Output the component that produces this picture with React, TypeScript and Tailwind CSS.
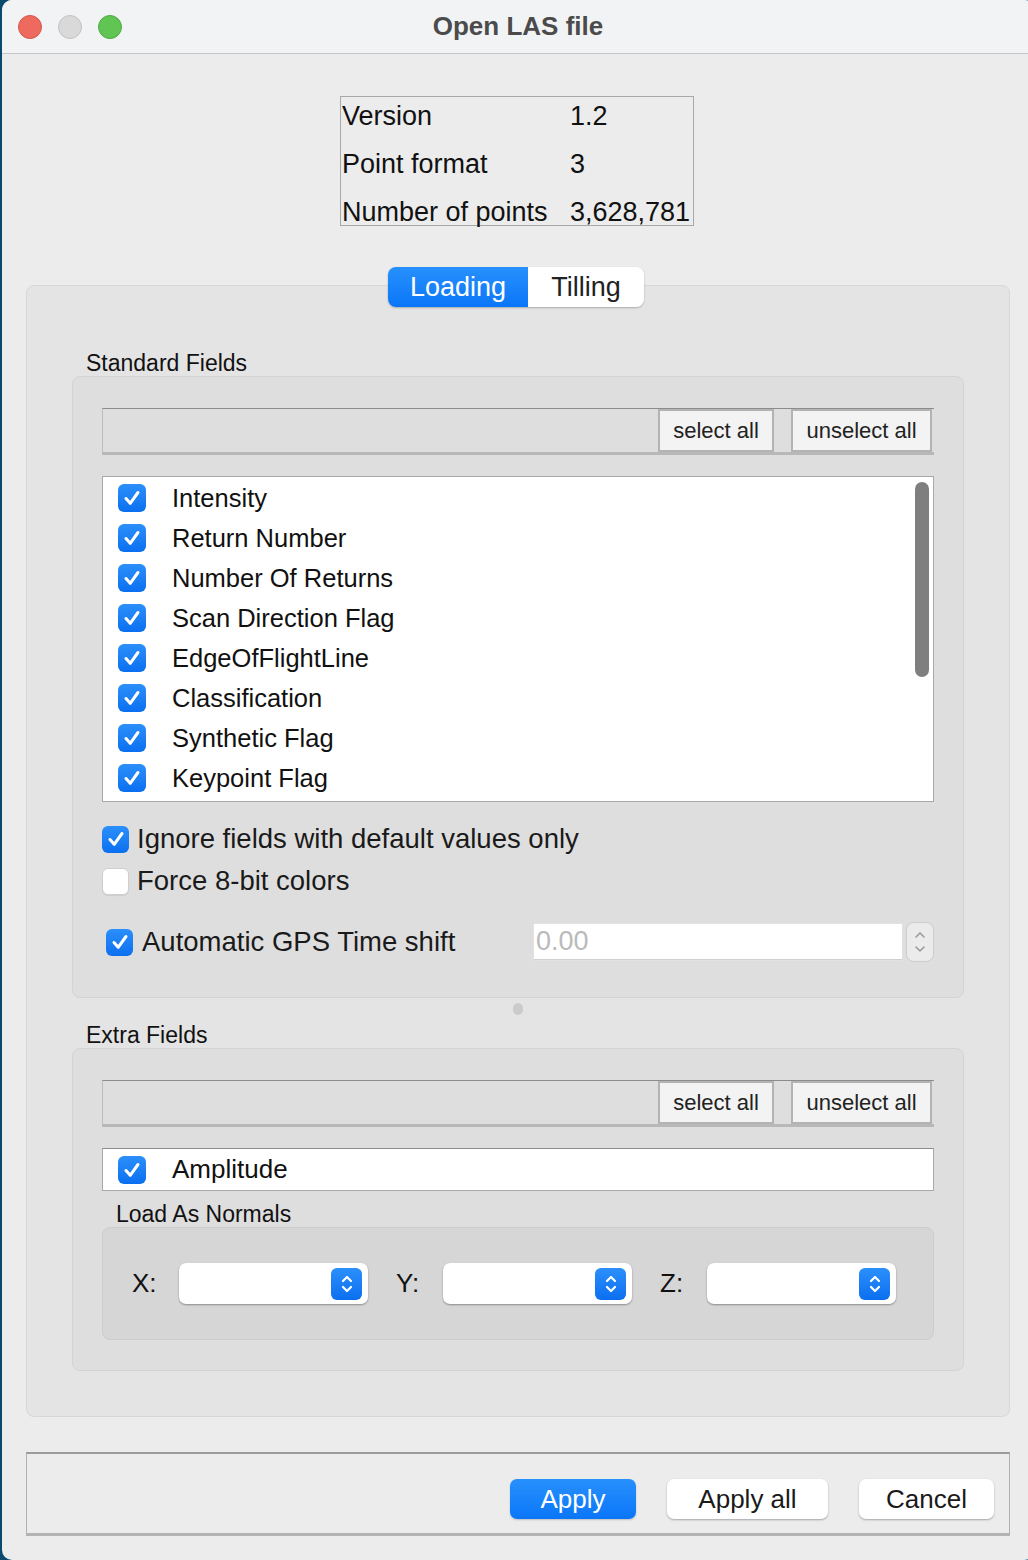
import React from 'react';

const font = "font-['Liberation_Sans',Arial,sans-serif]";

function Check({ size = 28, checked = true }: { size?: number; checked?: boolean }) {
  if (!checked) {
    return (
      <div
        className="shrink-0 rounded-[6px] bg-white border border-[#cfcfcf] shadow-[0_1px_1px_rgba(0,0,0,0.08)]"
        style={{ width: size, height: size }}
      />
    );
  }
  return (
    <div
      className="shrink-0 rounded-[6px] bg-gradient-to-b from-[#2b8ffb] to-[#0a6ff0] flex items-center justify-center"
      style={{ width: size, height: size }}
    >
      <svg width="20" height="20" viewBox="0 0 20 20" fill="none">
        <path d="M4 10.5l4.2 4.8L16 4.5" stroke="white" strokeWidth="3" strokeLinecap="round" strokeLinejoin="round" />
      </svg>
    </div>
  );
}

function ButtonBar() {
  return (
    <div className="h-[47px] flex items-center justify-end bg-[#dedede] border-t border-t-[#8c8c8c] border-l border-l-[#bcbcbc] border-b-[3px] border-b-[#b8b8b8]">
      <button className="h-[43px] w-[116px] bg-[#f3f3f3] border-2 border-[#b3b3b3] text-[22px] text-[#222]">select all</button>
      <button className="h-[43px] w-[141px] ml-[17px] mr-[2px] bg-[#f3f3f3] border-2 border-[#b3b3b3] text-[22px] text-[#222]">unselect all</button>
    </div>
  );
}

function Combo({ label }: { label: string }) {
  return (
    <div className="flex items-center">
      <span className="text-[26px] text-[#111] w-[47px]">{label}</span>
      <div className="w-[189px] h-[41px] bg-white rounded-[7px] shadow-[0_1px_2px_rgba(0,0,0,0.35)] flex items-center justify-end pr-[6px]">
        <div className="w-[31px] h-[32px] rounded-[6px] bg-gradient-to-b from-[#2b8ffb] to-[#0a6ff0] flex items-center justify-center">
          <svg width="14" height="22" viewBox="0 0 14 22" fill="none">
            <path d="M3 8l4-4 4 4M3 14l4 4 4-4" stroke="white" strokeWidth="2.2" strokeLinecap="round" strokeLinejoin="round" />
          </svg>
        </div>
      </div>
    </div>
  );
}

const fields = [
  'Intensity',
  'Return Number',
  'Number Of Returns',
  'Scan Direction Flag',
  'EdgeOfFlightLine',
  'Classification',
  'Synthetic Flag',
  'Keypoint Flag',
];

export default function App() {
  return (
    <div className={`w-[1028px] h-[1560px] flex bg-[#0b4a6c] pl-[2px] overflow-hidden ${font}`}>
      <div className="w-[1032px] shrink-0 flex flex-col bg-[#ececec] rounded-[10px] overflow-hidden">
        {/* Title bar */}
        <div className="h-[54px] shrink-0 bg-[#f2f3f5] border-b border-[#c6c6c6] grid grid-cols-[1fr_auto_1fr] items-center">
          <div className="flex items-center gap-[16px] pl-[16px]">
            <div className="w-[24px] h-[24px] rounded-full bg-[#ee6a5f] border border-[#d45649]" />
            <div className="w-[24px] h-[24px] rounded-full bg-[#d9d9d9] border border-[#c2c2c2]" />
            <div className="w-[24px] h-[24px] rounded-full bg-[#61c554] border border-[#51a845]" />
          </div>
          <div className="text-[26px] font-bold text-[#4b4b4b]">Open LAS file</div>
          <div />
        </div>

        {/* Info table */}
        <div className="mt-[42px] ml-[338px] w-[354px] h-[130px] border border-[#a8a8a8] flex flex-col gap-[10px] text-[27px] text-[#111] pl-[1px]">
          <div className="h-[38px] flex items-center"><span className="w-[228px]">Version</span><span>1.2</span></div>
          <div className="h-[38px] flex items-center"><span className="w-[228px]">Point format</span><span>3</span></div>
          <div className="h-[38px] flex items-center"><span className="w-[228px]">Number of points</span><span>3,628,781</span></div>
        </div>

        {/* Tabs */}
        <div className="mt-[41px] relative z-10 ml-[386px] flex w-[256px] h-[40px] rounded-[8px] overflow-hidden shadow-[0_1px_2px_rgba(0,0,0,0.25)] text-[27px]">
          <div className="w-[140px] bg-gradient-to-b from-[#2690fd] to-[#0a76f8] text-white flex items-center justify-center">Loading</div>
          <div className="flex-1 bg-white text-[#222] flex items-center justify-center">Tilling</div>
        </div>

        {/* Tab pane */}
        <div className="-mt-[22px] mx-[24px] h-[1132px] bg-[#e4e4e4] border border-[#d7d7d7] rounded-[8px] px-[45px] pt-[64px]">
          <div className="text-[23px] text-[#111] pl-[14px] h-[26px] leading-[26px]">Standard Fields</div>
          <div className="h-[622px] bg-[#dedede] border border-[#d3d3d3] rounded-[8px] px-[29px] pt-[31px]">
            <ButtonBar />
            <div className="mt-[21px] h-[326px] bg-white border border-[#a9a9a9] relative pl-[15px] pt-[1px]">
              {fields.map((f) => (
                <div key={f} className="h-[40px] flex items-center">
                  <Check />
                  <span className="ml-[26px] text-[25.5px] text-[#111]">{f}</span>
                </div>
              ))}
              {/* scrollbar thumb */}
              <div className="absolute right-[4px] top-[5px] w-[14px] h-[195px] rounded-full bg-[#7f7f7f]" />
            </div>
            <div className="mt-[20px] flex items-center h-[34px]">
              <Check size={27} />
              <span className="ml-[8px] text-[27.5px] text-[#1a1a1a]">Ignore fields with default values only</span>
            </div>
            <div className="mt-[8px] flex items-center h-[34px]">
              <Check size={27} checked={false} />
              <span className="ml-[8px] text-[27.5px] text-[#1a1a1a]">Force 8-bit colors</span>
            </div>
            <div className="mt-[23px] flex items-center h-[42px] pl-[4px]">
              <Check size={27} />
              <span className="ml-[9px] text-[27.5px] text-[#1a1a1a] w-[392px]">Automatic GPS Time shift</span>
              <div className="w-[368px] h-[36px] bg-white border-b border-[#cfcfcf] shadow-[0_0_0_1px_#e2e2e2] flex items-center pl-[2px] text-[27px] text-[#bababa]">0.00</div>
              <div className="ml-[4px] w-[28px] h-[40px] rounded-[8px] bg-[#ebebeb] border border-[#cdcdcd] flex items-center justify-center">
                <svg width="14" height="30" viewBox="0 0 14 30" fill="none">
                  <path d="M3 10l4-4 4 4M3 20l4 4 4-4" stroke="#9a9a9a" strokeWidth="1.6" strokeLinecap="round" strokeLinejoin="round" />
                </svg>
              </div>
            </div>
          </div>

          {/* splitter handle */}
          <div className="h-[22px] flex items-center justify-center">
            <div className="w-[10px] h-[12px] rounded-full bg-[#cbcbcb]" />
          </div>

          <div className="mt-[2px] text-[23px] text-[#111] pl-[14px] h-[26px] leading-[26px]">Extra Fields</div>
          <div className="h-[323px] bg-[#dedede] border border-[#d3d3d3] rounded-[8px] px-[29px] pt-[31px]">
            <ButtonBar />
            <div className="mt-[21px] h-[43px] bg-white border border-[#a9a9a9] border-t-[#8c8c8c] flex items-center pl-[15px]">
              <Check />
              <span className="ml-[26px] text-[26px] text-[#111]">Amplitude</span>
            </div>
            <div className="mt-[11px] text-[23px] text-[#111] pl-[14px] h-[25px] leading-[25px]">Load As Normals</div>
            <div className="h-[113px] bg-[#d6d6d6] border border-[#cdcdcd] rounded-[8px] flex items-center pl-[29px] gap-[28px]">
              <Combo label="X:" />
              <Combo label="Y:" />
              <Combo label="Z:" />
            </div>
          </div>
        </div>

        {/* Bottom buttons */}
        <div className="mt-[35px] mx-[24px] h-[84px] border-t-2 border-t-[#9b9b9b] border-l border-l-[#b0b0b0] border-r border-r-[#b0b0b0] border-b-[3px] border-b-[#b3b3b3] flex items-center justify-end pr-[15px] pt-[11px]">
          <button className="w-[126px] h-[40px] rounded-[7px] bg-gradient-to-b from-[#2690fd] to-[#0a76f8] text-white text-[26px] shadow-[0_1px_2px_rgba(0,0,0,0.2)]">Apply</button>
          <button className="ml-[31px] w-[161px] h-[40px] rounded-[7px] bg-white text-[#1a1a1a] text-[26px] shadow-[0_1px_2px_rgba(0,0,0,0.3)]">Apply all</button>
          <button className="ml-[31px] w-[135px] h-[40px] rounded-[7px] bg-white text-[#1a1a1a] text-[26px] shadow-[0_1px_2px_rgba(0,0,0,0.3)]">Cancel</button>
        </div>
      </div>
    </div>
  );
}
